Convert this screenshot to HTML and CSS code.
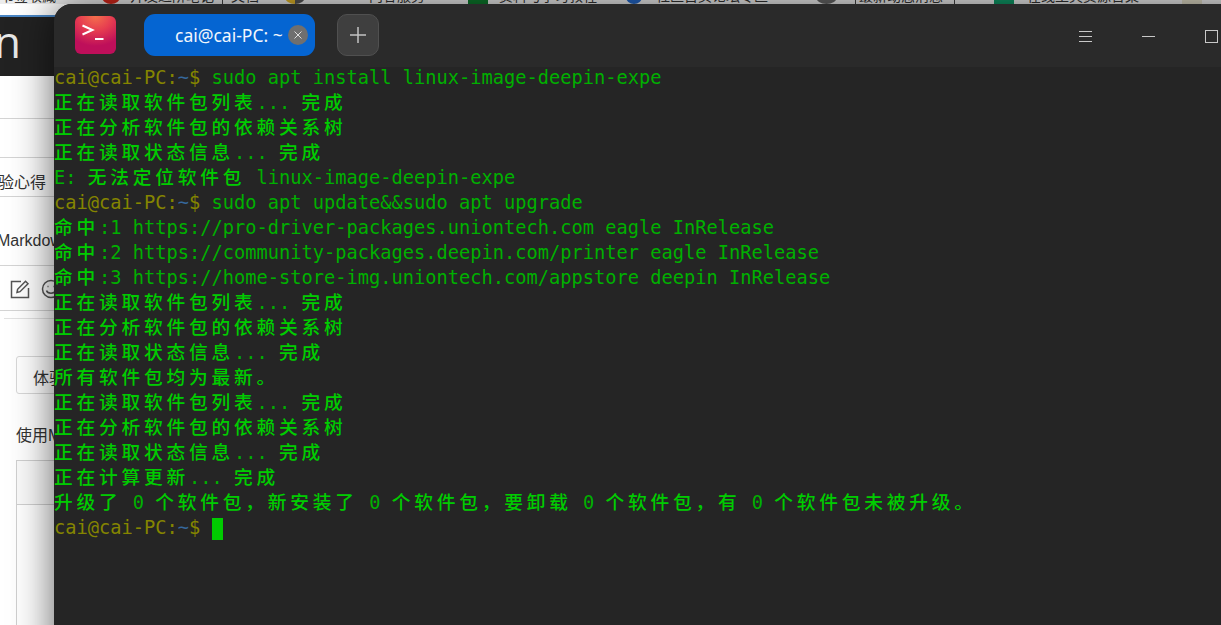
FILE: index.html
```html
<!DOCTYPE html>
<html lang="zh-CN">
<head>
<meta charset="utf-8">
<title>deepin terminal</title>
<link rel="stylesheet" href="styles.css">
</head>
<body>
<div class="desktop">
  <div class="page">
    <div class="bookmarks">
      <span class="bm bm-a">书签收藏</span>
      <i class="fav fav-red"></i>
      <span class="bm bm-b">开发进阶笔记</span>
      <i class="sep sep-a"></i>
      <span class="bm bm-c">文档</span>
      <i class="fav fav-yellow"></i>
      <span class="bm bm-d">内容服务</span>
      <i class="fav fav-green"></i>
      <span class="bm bm-e">资料与学习教程</span>
      <i class="fav fav-blue"></i>
      <span class="bm bm-f">社区首页论坛专区</span>
      <i class="fav fav-gray"></i>
      <i class="sep sep-b"></i>
      <span class="bm bm-g">最新动态消息</span>
      <i class="sep sep-c"></i>
      <i class="fav fav-teal"></i>
      <span class="bm bm-h">在线工具资源合集</span>
      <i class="fav fav-beige"></i>
    </div>
    <div class="browser-tab"></div>
    <div class="site-head"><span class="logo">n</span></div>
    <div class="row row-1"></div>
    <div class="row row-2"></div>
    <div class="row row-3"><span class="row-text">验心得</span></div>
    <div class="row row-4"><span class="row-text">Markdown</span></div>
    <div class="row row-5">
      <svg class="tool" width="20" height="20" viewBox="0 0 20 20" fill="none" stroke="#555" stroke-width="1.5">
        <path d="M11 2.500H1.500V18.500H18.500V9"/>
        <path d="M7 13.500l.6-3.200L15.500 2.200l2.500 2.500-8 8z"/>
      </svg>
      <svg class="tool" width="20" height="20" viewBox="0 0 20 20" fill="none" stroke="#555" stroke-width="1.5">
        <circle cx="10" cy="10" r="8.500"/>
        <path d="M5.500 11.500c1 3.500 8 3.500 9 0"/>
        <path d="M6.500 7.500h1M12.500 7.500h1"/>
      </svg>
    </div>
    <div class="thin-rule"></div>
    <div class="field"><span>体验心得</span></div>
    <div class="label">使用Markdown</div>
    <div class="editor"><div class="editor-head"></div></div>
  </div>

  <section class="terminal">
    <header class="term-bar">
      <div class="app-icon">
        <svg width="41" height="38" viewBox="0 0 41 38" fill="none" stroke="#fff" stroke-width="2">
          <path d="M7.500 9.500l10 4.500-10 4.500"/>
          <path d="M20 23h8.500"/>
        </svg>
      </div>
      <div class="tab">
        <span class="tab-title">cai@cai-PC: ~</span>
        <span class="tab-close">
          <svg width="10" height="10" viewBox="0 0 10 10" stroke="#ddd" stroke-width="1"><path d="M1.500 1.500l7 7M8.500 1.500l-7 7"/></svg>
        </span>
      </div>
      <div class="add">
        <svg width="16" height="16" viewBox="0 0 16 16" stroke="#c4c4c4" stroke-width="1.500"><path d="M8 0v16M0 8h16"/></svg>
      </div>
      <div class="controls">
        <svg width="13" height="13" viewBox="0 0 13 13" stroke="#c8c8c8" stroke-width="1"><path d="M0 1.500h13M0 6.500h13M0 11.500h13"/></svg>
        <svg width="13" height="13" viewBox="0 0 13 13" stroke="#c8c8c8" stroke-width="1"><path d="M0 6.500h13"/></svg>
        <svg width="13" height="13" viewBox="0 0 13 13" fill="none" stroke="#c8c8c8" stroke-width="1"><rect x=".5" y=".5" width="12" height="12"/></svg>
      </div>
    </header>
    <div class="screen">
      <div class="ln"><span class="pr">cai@cai-PC:</span><span class="ti">~</span><span class="pr">$</span> sudo apt install linux-image-deepin-expe</div>
      <div class="ln"><b>正在读取软件包列表</b>... <b>完成</b></div>
      <div class="ln"><b>正在分析软件包的依赖关系树</b></div>
      <div class="ln"><b>正在读取状态信息</b>... <b>完成</b></div>
      <div class="ln">E: <b>无法定位软件包</b> linux-image-deepin-expe</div>
      <div class="ln"><span class="pr">cai@cai-PC:</span><span class="ti">~</span><span class="pr">$</span> sudo apt update&amp;&amp;sudo apt upgrade</div>
      <div class="ln"><b>命中</b>:1 https://pro-driver-packages.uniontech.com eagle InRelease</div>
      <div class="ln"><b>命中</b>:2 https://community-packages.deepin.com/printer eagle InRelease</div>
      <div class="ln"><b>命中</b>:3 https://home-store-img.uniontech.com/appstore deepin InRelease</div>
      <div class="ln"><b>正在读取软件包列表</b>... <b>完成</b></div>
      <div class="ln"><b>正在分析软件包的依赖关系树</b></div>
      <div class="ln"><b>正在读取状态信息</b>... <b>完成</b></div>
      <div class="ln"><b>所有软件包均为最新。</b></div>
      <div class="ln"><b>正在读取软件包列表</b>... <b>完成</b></div>
      <div class="ln"><b>正在分析软件包的依赖关系树</b></div>
      <div class="ln"><b>正在读取状态信息</b>... <b>完成</b></div>
      <div class="ln"><b>正在计算更新</b>... <b>完成</b></div>
      <div class="ln"><b>升级了</b> 0 <b>个软件包，新安装了</b> 0 <b>个软件包，要卸载</b> 0 <b>个软件包，有</b> 0 <b>个软件包未被升级。</b></div>
      <div class="ln"><span class="pr">cai@cai-PC:</span><span class="ti">~</span><span class="pr">$</span> <span class="cursor"></span></div>
    </div>
  </section>
</div>
</body>
</html>
```
FILE: styles.css
```css
* { box-sizing: border-box; }
html, body { margin: 0; height: 100%; overflow: hidden; background: #fff; }
body { font-family: "Liberation Sans", "Noto Sans CJK SC", sans-serif; }

.desktop { position: relative; width: 1221px; height: 625px; overflow: hidden; }
.page { width: 1221px; height: 625px; background: #fff; }

/* browser bookmarks, only their lowest pixels show */
.bookmarks { height: 4px; background: #ececec; overflow: hidden; display: flex; align-items: flex-end; }
.bm { font-size: 14px; line-height: 14px; color: #333; white-space: nowrap; flex: none; height: 14px; margin-bottom: 1px; overflow: hidden; }
.fav { flex: none; height: 14px; width: 18px; border-radius: 50%; display: block; }
.sep { flex: none; width: 1px; height: 4px; background: #444; display: block; }
.bm-a { width: 60px; }
.fav-red { background: #d8281c; margin-left: 42px; }
.bm-b { margin-left: 10px; width: 90px; }
.sep-a { margin-left: 2px; }
.bm-c { margin-left: 8px; width: 30px; }
.fav-yellow { background: linear-gradient(90deg, #e0b428 50%, #555 50%); margin-left: 24px; width: 20px; }
.bm-d { margin-left: 64px; width: 99px; }
.fav-green { background: #0c7a2c; border-radius: 0; width: 20px; }
.bm-e { margin-left: 11px; width: 101px; }
.fav-blue { background: #2367c8; margin-left: 26px; width: 16px; }
.bm-f { margin-left: 14px; width: 118px; }
.fav-gray { background: #666; margin-left: 42px; width: 21px; }
.sep-b { margin-left: 18px; }
.bm-g { margin-left: 3px; width: 90px; }
.sep-c { margin-left: 5px; }
.fav-teal { background: #0f9a68; border-radius: 0; margin-left: 39px; width: 20px; }
.bm-h { margin-left: 13px; width: 115px; }
.fav-beige { background: #ddd9c4; border-radius: 0; margin-left: 40px; width: 20px; }

.browser-tab { height: 13px; background: #fff; border-bottom: 2px solid #4a86c4; }
.site-head { height: 59px; background: #222; overflow: hidden; display: flex; align-items: center; }
.logo { font-size: 44px; line-height: 44px; color: #e8e8e8; margin-left: -6px; margin-top: -12px; font-family: "Open Sans", sans-serif; font-weight: 500; }

.row { border-bottom: 1px solid #d4d4d4; display: flex; align-items: center; overflow: hidden; }
.row-1 { height: 43px; }
.row-2 { height: 39px; }
.row-3 { height: 39px; padding-top: 8px; }
.row-4 { height: 69px; padding-top: 20px; }
.row-5 { height: 45px; padding: 1px 0 0 10px; gap: 11px; background: #fff; }
.row-text { font-size: 16px; color: #333; white-space: nowrap; margin-left: -2px; }
.row-4 .row-text { margin-left: -3px; }
.tool { flex: none; }
.thin-rule { height: 1px; margin: 7px 0 0 4px; background: #e2e2e2; }
.field { width: 180px; height: 38px; margin: 37px 0 0 16px; border: 1px solid #d8d8d8; border-radius: 3px; padding: 3px 0 0 16px; display: flex; align-items: center; font-size: 16px; color: #333; }
.label { margin: 32px 0 0 16px; font-size: 16px; line-height: 20px; color: #333; }
.editor { width: 400px; height: 200px; margin: 14px 0 0 16px; border: 1px solid #d0d0d0; }
.editor-head { height: 44px; border-bottom: 1px solid #d0d0d0; background: #fafafa; }

/* terminal window floats over the browser */
.terminal { position: absolute; left: 54px; top: 4px; width: 1300px; height: 700px; background: #252525; border-radius: 18px 0 0 0; box-shadow: 0 0 42px rgba(0, 0, 0, .62); }
.term-bar { height: 63px; background: #2a2a2a; border-radius: 18px 0 0 0; display: flex; align-items: flex-start; }
.app-icon { width: 41px; height: 38px; margin: 12px 0 0 21px; border-radius: 6px; background: radial-gradient(ellipse 34px 30px at 50% 0, #f4704c 0%, #e63c50 50%, #be0f5a 100%); }
.app-icon svg { display: block; }
.tab { width: 171px; height: 42px; margin: 10px 0 0 28px; border-radius: 11px; background: #0565d2; display: flex; align-items: center; padding: 0 7px 0 31px; justify-content: space-between; }
.tab-title { font: 17.500px "Noto Sans", sans-serif; color: #f2f6fc; white-space: nowrap; }
.tab-close { width: 20px; height: 20px; border-radius: 50%; background: #6f6f6f; display: flex; align-items: center; justify-content: center; flex: none; }
.add { width: 42px; height: 42px; margin: 10px 0 0 22px; border-radius: 10px; background: #3f3f3f; border: 1px solid #505050; display: flex; align-items: center; justify-content: center; }
.controls { margin: 26px 0 0 700px; display: flex; gap: 50px; }
.controls svg { display: block; }

.screen { font: 18.700px/25px "DejaVu Sans Mono", "Noto Sans CJK SC", monospace; color: #00b000; margin-top: -2px; }
.ln { height: 25px; white-space: pre; }
.ln b { font-family: "Noto Sans CJK SC", sans-serif; font-weight: 500; line-height: 0; letter-spacing: 3.820px; color: #00cc00; }
.pr { color: #858500; }
.ti { color: #36689c; }
.cursor { display: inline-block; width: 11px; height: 22px; background: #00cc00; vertical-align: -6px; }
```
